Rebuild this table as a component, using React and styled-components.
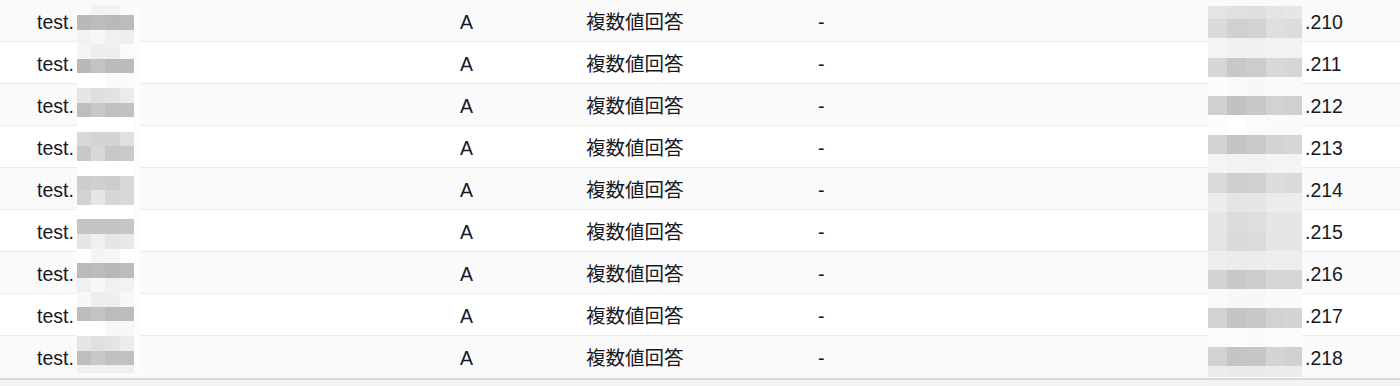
import React from "react";
import styled, { createGlobalStyle } from "styled-components";

const Global = createGlobalStyle`
  html, body { margin: 0; padding: 0; }
  body {
    background: #f2f3f3;
    font-family: "Liberation Sans", "Noto Sans CJK JP", sans-serif;
    color: #16191f;
  }
`;

const Wrap = styled.div`
  position: relative;
  width: 1400px;
  background: #ffffff;
  border-bottom: 2px solid #d5dbdb;
`;

const Row = styled.div`
  display: grid;
  grid-template-columns: 460px 126px 232px 389px 1fr;
  align-items: center;
  box-sizing: border-box;
  height: 42px;
  padding-top: 3px;
  background: ${(p) => (p.$odd ? "#fafafa" : "#ffffff")};
  border-bottom: ${(p) => (p.$last ? "1px solid #fafafa" : "1px solid #eaeded")};
  font-size: 19.5px;
  line-height: 24px;
`;

const Cell = styled.div`
  padding-left: ${(p) => p.$pad || 0}px;
  white-space: nowrap;
`;

const Mosaic = styled.div`
  position: absolute;
  left: ${(p) => p.$left}px;
  top: ${(p) => p.$top}px;
  width: ${(p) => p.$width}px;
  height: ${(p) => p.$height}px;
  overflow: hidden;
  background: #fcfcfc;
  padding-right: ${(p) => p.$padR || 0}px;
  display: grid;
  grid-template-columns: ${(p) => p.$cols};
  grid-template-rows: ${(p) => p.$firstRow}px;
  grid-auto-rows: ${(p) => p.$rowH}px;
`;

const Tile = styled.div`
  background: ${(p) => p.$c};
`;

const leftMosaic = [
  ["#fafafa", "#f2f2f2", "#f2f2f2", "#fafafa"],
  ["#b9b9b9", "#bdbdbd", "#b9b9b9", "#bcbcbc"],
  ["#f2f2f2", "#f7f7f7", "#f0f0f0", "#eeeeee"],
  ["#f5f5f5", "#efefef", "#efefef", "#fafafa"],
  ["#b9b9b9", "#c4c4c4", "#bbbbbb", "#bbbbbb"],
  ["#ffffff", "#ffffff", "#fafafa", "#fafafa"],
  ["#e6e6e6", "#dedede", "#e2e2e2", "#ebebeb"],
  ["#bebebe", "#c8c8c8", "#c0c0c0", "#c2c2c2"],
  ["#ffffff", "#ffffff", "#ffffff", "#ffffff"],
  ["#d8d8d8", "#d4d4d6", "#d4d4d4", "#e0e0e2"],
  ["#c8c8c8", "#d8d8d8", "#c8c8c8", "#cacaca"],
  ["#ffffff", "#ffffff", "#ffffff", "#ffffff"],
  ["#cdcdcd", "#cfcfcf", "#cdcdcd", "#d8d8d8"],
  ["#d2d2d2", "#e6e6e6", "#d6d6d6", "#d8d8d8"],
  ["#ffffff", "#ffffff", "#ffffff", "#ffffff"],
  ["#c4c4c4", "#c4c4c4", "#c4c4c4", "#c6c6c6"],
  ["#e6e6e6", "#f0f0f0", "#e6e6e6", "#e8e8e8"],
  ["#ffffff", "#f4f4f4", "#f6f6f6", "#ffffff"],
  ["#bababa", "#bcbcbc", "#b8b8b8", "#bcbcbc"],
  ["#f0f0f0", "#f8f8f8", "#f0f0f0", "#f2f2f2"],
  ["#f8f8f8", "#eeeeee", "#efefef", "#f8f8f8"],
  ["#bcbcbc", "#c4c4c4", "#bcbcbc", "#bcbcbc"],
  ["#ffffff", "#ffffff", "#f8f8f8", "#f8f8f8"],
  ["#e6e6e6", "#e0e0e2", "#e4e4e4", "#ececec"],
  ["#bebebe", "#c8c8c8", "#c0c0c0", "#c0c0c0"],
  ["#f0f0f0", "#f0f0f0", "#f0f0f0", "#f0f0f0"],
];

const rightMosaic = [
  ["#e4e4e4", "#e0e0e0", "#dedede", "#e4e4e4", "#e6e6e6"],
  ["#dadada", "#d0d0d0", "#d2d2d2", "#dedede", "#dcdcdc"],
  ["#f4f4f4", "#f0f0f0", "#f0f0f0", "#f2f2f2", "#f2f2f2"],
  ["#d6d6d6", "#c8c8c8", "#cccccc", "#d8d8d8", "#d6d6d6"],
  ["#fcfcfc", "#fafafa", "#f8f8f8", "#fafafa", "#fafafa"],
  ["#d0d0d0", "#c2c2c4", "#c8c8c8", "#d2d2d4", "#d0d0d0"],
  ["#fcfcfc", "#ffffff", "#fcfcfc", "#fafafa", "#fafafa"],
  ["#d2d2d4", "#c4c4c4", "#cacaca", "#d4d4d4", "#d6d6d6"],
  ["#f4f4f4", "#f2f2f2", "#f2f2f2", "#f4f4f4", "#f4f4f4"],
  ["#dadada", "#cecece", "#d0d0d0", "#dcdcdc", "#dadada"],
  ["#ececec", "#e4e4e4", "#e6e6e6", "#ececec", "#ececec"],
  ["#e6e6e6", "#dcdcdc", "#dedede", "#e6e6e6", "#e6e6e6"],
  ["#e4e4e4", "#dadada", "#dcdcdc", "#e6e6e6", "#e6e6e6"],
  ["#eeeeee", "#ececec", "#ececec", "#eeeeee", "#eeeeee"],
  ["#d4d4d4", "#c8c8c8", "#cccccc", "#d6d6d6", "#d6d6d6"],
  ["#fafafa", "#f8f8f8", "#f8f8f8", "#fafafa", "#fafafa"],
  ["#d2d2d2", "#c4c4c4", "#c8c8c8", "#d2d2d4", "#d4d4d4"],
  ["#fcfcfc", "#fcfcfc", "#fafafa", "#fcfcfc", "#fcfcfc"],
  ["#d2d2d2", "#c4c4c4", "#c6c6c6", "#d4d4d4", "#d0d0d0"],
  ["#ececec", "#eaeaea", "#eaeaea", "#ececec", "#ececec"],
];

const rows = Array.from({ length: 9 }, (_, i) => ({
  name: "test.",
  type: "A",
  policy: "複数値回答",
  id: "-",
  value: "." + (210 + i),
}));

export default function App() {
  return (
    <>
      <Global />
      <Wrap>
        {rows.map((r, i) => (
          <Row key={i} $odd={i % 2 === 0} $last={i === rows.length - 1}>
            <Cell $pad={37}>{r.name}</Cell>
            <Cell>{r.type}</Cell>
            <Cell>{r.policy}</Cell>
            <Cell>{r.id}</Cell>
            <Cell $pad={98}>{r.value}</Cell>
          </Row>
        ))}
        <Mosaic
          $left={77}
          $top={5}
          $width={57}
          $height={368}
          $padR={6}
          $cols="14px 14px 15px 14px"
          $firstRow={10}
          $rowH={14.6}
        >
          {leftMosaic.flatMap((row, ri) =>
            row.map((c, ci) => <Tile key={ri + "-" + ci} $c={c} />)
          )}
        </Mosaic>
        <Mosaic
          $left={1208}
          $top={6}
          $width={94}
          $height={371}
          $cols="19px 19px 20px 19px 17px"
          $firstRow={13}
          $rowH={19.3}
        >
          {rightMosaic.flatMap((row, ri) =>
            row.map((c, ci) => <Tile key={ri + "-" + ci} $c={c} />)
          )}
        </Mosaic>
      </Wrap>
    </>
  );
}
